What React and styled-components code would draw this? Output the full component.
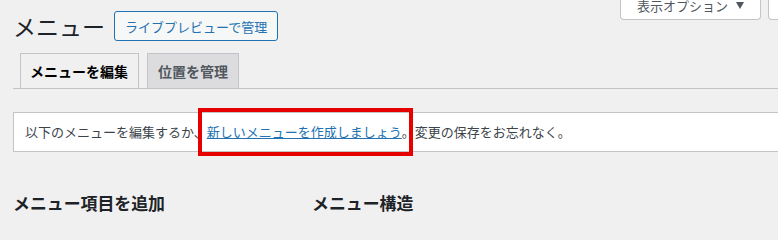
import React from "react";
import styled, { createGlobalStyle } from "styled-components";

const GlobalStyle = createGlobalStyle`
  html, body {
    margin: 0;
    padding: 0;
    background: #f0f0f1;
    overflow: hidden;
  }
  body {
    width: 778px;
    height: 220px;
    color: #3c434a;
    font-family: "Noto Sans CJK JP", "Noto Sans", sans-serif;
    font-size: 13px;
  }
`;

const Page = styled.div`
  padding-left: 13px;
`;

// Header: title, live preview button, screen options
const Header = styled.div`
  display: flex;
  justify-content: space-between;
  align-items: flex-start;
`;

const TitleGroup = styled.div`
  display: flex;
  align-items: center;
  gap: 9px;
  height: 30px;
  margin-top: 11px;
`;

const Title = styled.h1`
  margin: 0;
  font-size: 23px;
  font-weight: 400;
  line-height: 30px;
  color: #1d2327;
`;

const OutlineButton = styled.a`
  display: inline-flex;
  align-items: center;
  box-sizing: border-box;
  height: 30px;
  padding: 0 10px;
  border: 1px solid #2271b1;
  border-radius: 3px;
  background: #f6f7f7;
  color: #2271b1;
  font-size: 13px;
  text-decoration: none;
  white-space: nowrap;
`;

const ScreenLinks = styled.div`
  display: flex;
  gap: 7px;
  flex-shrink: 0;
  margin-top: -8px;
  margin-right: -79px;
`;

const MetaButton = styled.button`
  display: flex;
  align-items: center;
  gap: 8px;
  box-sizing: border-box;
  height: 28px;
  padding: 0 16px;
  border: 1px solid #c3c4c7;
  border-top: none;
  border-radius: 0 0 4px 4px;
  background: #fff;
  color: #50575e;
  font-family: inherit;
  font-size: 13px;
  line-height: 28px;
  white-space: nowrap;
`;

const Caret = styled.span`
  width: 0;
  height: 0;
  border-left: 4px solid transparent;
  border-right: 4px solid transparent;
  border-top: 7px solid #50575e;
  margin-top: -1px;
`;

// Tabs
const Tabs = styled.nav`
  display: flex;
  align-items: flex-end;
  gap: 8px;
  margin-top: 12px;
  padding-left: 7px;
  border-bottom: 1px solid #c3c4c7;
`;

const Tab = styled.a`
  box-sizing: border-box;
  height: 35px;
  padding: 0 10px 0 ${(p) => (p.$active ? "9px" : "10px")};
  border: 1px solid #c3c4c7;
  border-bottom: none;
  background: ${(p) => (p.$active ? "#f0f0f1" : "#dcdcde")};
  color: ${(p) => (p.$active ? "#000" : "#50575e")};
  font-size: 14px;
  font-weight: 700;
  line-height: 34px;
  text-decoration: none;
`;

// Notice
const Notice = styled.div`
  margin-top: 23px;
  margin-right: -20px;
  padding: 9px 11px;
  border: 1px solid #c3c4c7;
  background: #fff;
  line-height: 20px;
  white-space: nowrap;
`;

const Highlight = styled.span`
  position: relative;
  display: inline-block;
  height: 20px;

  &::after {
    content: "";
    position: absolute;
    left: -9px;
    right: -11px;
    top: -14px;
    bottom: -14px;
    border: 4px solid #e60000;
    box-sizing: border-box;
    pointer-events: none;
  }
`;

const Link = styled.a`
  color: #2271b1;
  text-decoration: underline;
`;

// Columns
const Columns = styled.div`
  display: grid;
  grid-template-columns: 299px 1fr;
  margin-top: 39px;
`;

const SectionTitle = styled.h2`
  margin: 0;
  font-size: 16.9px;
  font-weight: 700;
  line-height: 24px;
  color: #1d2327;
`;

export default function App() {
  return (
    <>
      <GlobalStyle />
      <Page>
        <Header>
          <TitleGroup>
            <Title>メニュー</Title>
            <OutlineButton href="#">ライブプレビューで管理</OutlineButton>
          </TitleGroup>
          <ScreenLinks>
            <MetaButton>
              表示オプション
              <Caret />
            </MetaButton>
            <MetaButton>
              ヘルプ
              <Caret />
            </MetaButton>
          </ScreenLinks>
        </Header>

        <Tabs>
          <Tab href="#" $active>
            メニューを編集
          </Tab>
          <Tab href="#">位置を管理</Tab>
        </Tabs>

        <Notice>
          以下のメニューを編集するか、
          <Highlight>
            <Link href="#">新しいメニューを作成しましょう</Link>
          </Highlight>
          。変更の保存をお忘れなく。
        </Notice>

        <Columns>
          <SectionTitle>メニュー項目を追加</SectionTitle>
          <SectionTitle>メニュー構造</SectionTitle>
        </Columns>
      </Page>
    </>
  );
}
